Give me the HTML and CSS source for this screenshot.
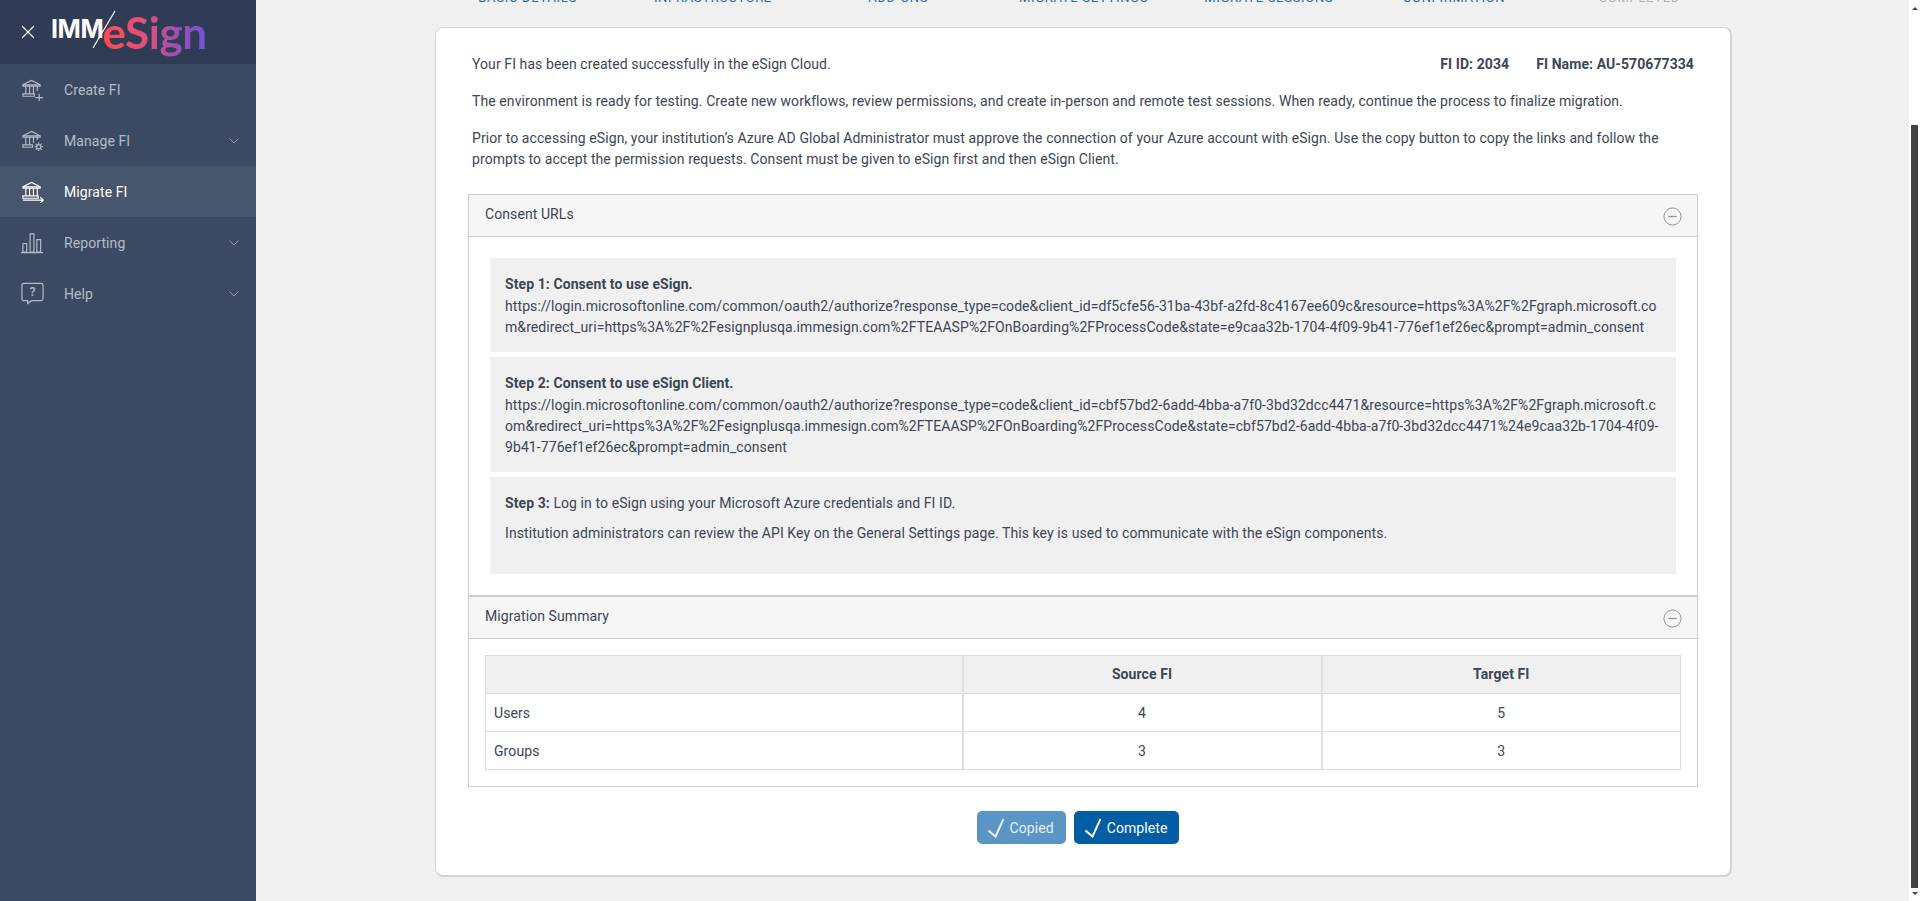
FILE: index.html
```html
<!DOCTYPE html>
<html lang="en">
<head>
<meta charset="utf-8">
<title>Migrate FI</title>
<link rel="stylesheet" href="styles.css">
</head>
<body>
<div class="app">
  <aside class="sidebar">
    <header class="brand">
      <svg class="close-icon" viewBox="0 0 14 14"><path d="M1 1l12 12M13 1L1 13"/></svg>
      <div class="logo">
        <span class="logo-imm">IMM</span>
        <span class="logo-esign">eSign</span>
        <svg class="logo-slash" viewBox="0 0 24 40"><path d="M1 38L23 1"/></svg>
      </div>
    </header>
    <nav class="nav">
      <a class="nav-item">
        <svg class="nav-icon" viewBox="0 0 24 24"><path d="M2 7L11 2.500 20 7zM2 7h18v1.500H2zM5 8.500v8M9 8.500v8M13 8.500v8M17 8.500v5M2 16.500h12v2.500H2zM15 20.500h8M19 16.500v8"/></svg>
        <span class="nav-label">Create FI</span>
      </a>
      <a class="nav-item">
        <svg class="nav-icon" viewBox="0 0 24 24"><path d="M2 7L11 2.500 20 7zM2 7h18v1.500H2zM5 8.500v8M9 8.500v8M13 8.500v6M17 8.500v3M2 16.500h10v2.500H2z"/><circle cx="18.500" cy="18.500" r="2.200"/><path d="M18.500 14v2M18.500 21v2M14 18.500h2M21 18.500h2M15.300 15.300l1.500 1.500M20.200 20.200l1.500 1.500M21.700 15.300l-1.500 1.500M16.800 20.200l-1.500 1.500"/></svg>
        <span class="nav-label">Manage FI</span>
        <svg class="chevron" viewBox="0 0 10 6"><path d="M.5.500L5 5 9.500.500"/></svg>
      </a>
      <a class="nav-item is-active">
        <svg class="nav-icon" viewBox="0 0 24 24"><path d="M2 7L11 2.500 20 7zM2 7h18v1.500H2zM5 8.500v8M9 8.500v8M13 8.500v8M17 8.500v8M2 16.500h16v2.500H2zM2 21h21M20 18l3.300 3-3.300 3"/></svg>
        <span class="nav-label">Migrate FI</span>
      </a>
      <a class="nav-item">
        <svg class="nav-icon" viewBox="0 0 24 24"><path d="M2 13h4v9H2zM9.500 3h4v19h-4zM16.500 9h4v13h-4zM0 22.500h23"/></svg>
        <span class="nav-label">Reporting</span>
        <svg class="chevron" viewBox="0 0 10 6"><path d="M.5.500L5 5 9.500.500"/></svg>
      </a>
      <a class="nav-item">
        <svg class="nav-icon" viewBox="0 0 24 24"><path d="M3 1.500h18a2 2 0 0 1 2 2v14a2 2 0 0 1-2 2H11l-4 3v-3H3a2 2 0 0 1-2-2v-14a2 2 0 0 1 2-2z"/><text class="help-mark" x="12" y="15" text-anchor="middle">?</text></svg>
        <span class="nav-label">Help</span>
        <svg class="chevron" viewBox="0 0 10 6"><path d="M.5.500L5 5 9.500.500"/></svg>
      </a>
    </nav>
  </aside>

  <main class="main">
    <ol class="stepper">
      <li>Basic Details</li>
      <li>Infrastructure</li>
      <li>Add-Ons</li>
      <li>Migrate Settings</li>
      <li>Migrate Sessions</li>
      <li>Confirmation</li>
      <li class="is-pending">Completed</li>
    </ol>

    <section class="card">
      <div class="intro">
        <div class="intro-top">
          <p>Your FI has been created successfully in the eSign Cloud.</p>
          <div class="fi-meta"><strong>FI ID: 2034</strong><strong>FI Name: AU-570677334</strong></div>
        </div>
        <p>The environment is ready for testing. Create new workflows, review permissions, and create in-person and remote test sessions. When ready, continue the process to finalize migration.</p>
        <p>Prior to accessing eSign, your institution’s Azure AD Global Administrator must approve the connection of your Azure account with eSign. Use the copy button to copy the links and follow the prompts to accept the permission requests. Consent must be given to eSign first and then eSign Client.</p>
      </div>

      <div class="accordion">
        <div class="panel">
          <div class="panel-head">
            <span>Consent URLs</span>
            <svg class="toggle" viewBox="0 0 20 20"><circle cx="10" cy="10" r="9"/><path d="M5.500 10h9"/></svg>
          </div>
          <div class="panel-body consent">
            <div class="step-box">
              <strong class="step-title">Step 1: Consent to use eSign.</strong>
              <div class="url">https://login.microsoftonline.com/common/oauth2/authorize?response_type=code&amp;client_id=df5cfe56-31ba-43bf-a2fd-8c4167ee609c&amp;resource=https%3A%2F%2Fgraph.microsoft.com&amp;redirect_uri=https%3A%2F%2Fesignplusqa.immesign.com%2FTEAASP%2FOnBoarding%2FProcessCode&amp;state=e9caa32b-1704-4f09-9b41-776ef1ef26ec&amp;prompt=admin_consent</div>
            </div>
            <div class="step-box">
              <strong class="step-title">Step 2: Consent to use eSign Client.</strong>
              <div class="url">https://login.microsoftonline.com/common/oauth2/authorize?response_type=code&amp;client_id=cbf57bd2-6add-4bba-a7f0-3bd32dcc4471&amp;resource=https%3A%2F%2Fgraph.microsoft.com&amp;redirect_uri=https%3A%2F%2Fesignplusqa.immesign.com%2FTEAASP%2FOnBoarding%2FProcessCode&amp;state=cbf57bd2-6add-4bba-a7f0-3bd32dcc4471%24e9caa32b-1704-4f09-9b41-776ef1ef26ec&amp;prompt=admin_consent</div>
            </div>
            <div class="step-box step-last">
              <p><strong>Step 3:</strong> Log in to eSign using your Microsoft Azure credentials and FI ID.</p>
              <p>Institution administrators can review the API Key on the General Settings page. This key is used to communicate with the eSign components.</p>
            </div>
          </div>
        </div>

        <div class="panel panel-second">
          <div class="panel-head">
            <span>Migration Summary</span>
            <svg class="toggle" viewBox="0 0 20 20"><circle cx="10" cy="10" r="9"/><path d="M5.500 10h9"/></svg>
          </div>
          <div class="panel-body summary">
            <table class="summary-table">
              <colgroup><col class="col-name"><col class="col-val"><col class="col-val"></colgroup>
              <thead>
                <tr><th></th><th>Source FI</th><th>Target FI</th></tr>
              </thead>
              <tbody>
                <tr><td>Users</td><td>4</td><td>5</td></tr>
                <tr><td>Groups</td><td>3</td><td>3</td></tr>
              </tbody>
            </table>
          </div>
        </div>
      </div>

      <div class="actions">
        <button class="btn btn-muted" type="button"><svg class="check" viewBox="0 0 16 20"><path d="M.5 12.500L7.500 18.500 15.500 1"/></svg>Copied</button>
        <button class="btn" type="button"><svg class="check" viewBox="0 0 16 20"><path d="M.5 12.500L7.500 18.500 15.500 1"/></svg>Complete</button>
      </div>
    </section>
  </main>

  <div class="scrollbar">
    <span class="scroll-arrow scroll-up"></span>
    <span class="scroll-thumb"></span>
    <span class="scroll-arrow scroll-down"></span>
  </div>
</div>
</body>
</html>
```
FILE: styles.css
```css
* { box-sizing: border-box; }
html, body { margin: 0; height: 100%; overflow: hidden; }
body {
  font-family: Roboto, "Liberation Sans", sans-serif;
  font-size: 14px;
  line-height: 21px;
  letter-spacing: .085px;
  color: #3d4653;
  background: #f0f0f0;
}
.app { display: flex; height: 901px; }

/* Sidebar */
.sidebar { width: 256px; flex: none; background: #3b4a62; color: #b4bcc8; }
.brand {
  height: 64px;
  display: flex;
  align-items: center;
  background: #303c55;
  padding-left: 21px;
  gap: 16px;
}
.close-icon { width: 14px; height: 14px; fill: none; stroke: #fff; stroke-width: 1.1; }
.logo { position: relative; display: flex; align-items: baseline; height: 50px; }
.logo-imm { font-family: Inter, sans-serif; font-weight: 700; font-size: 25px; line-height: 50px; color: #fff; letter-spacing: -0.4px; position: relative; top: -11px; }
.logo-esign {
  font-family: Lato, sans-serif;
  font-weight: 700;
  font-size: 44px;
  line-height: 50px;
  letter-spacing: -.4px;
  margin-left: -1px;
  background: linear-gradient(90deg, #ff4a4f 0%, #e2507c 40%, #a050b0 70%, #6f52d8 100%);
  -webkit-background-clip: text;
  background-clip: text;
  color: transparent;
}
.logo-slash { position: absolute; left: 41px; top: 3px; width: 24px; height: 40px; fill: none; stroke: #fff; stroke-width: 1.2; }
.nav { display: flex; flex-direction: column; }
.nav-item { height: 51px; display: flex; align-items: center; padding-left: 21px; }
.nav-item.is-active { background: #47566c; color: #fff; }
.nav-icon { width: 23px; height: 23px; flex: none; fill: none; stroke: currentColor; stroke-width: 1.2; }
.help-mark { font-family: Roboto, sans-serif; font-size: 13px; font-weight: 500; fill: currentColor; stroke: none; }
.nav-label { margin-left: 20px; padding-top: 2px; flex: 1; }
.chevron { width: 10px; height: 6px; margin-right: 17px; fill: none; stroke: #8f99a8; stroke-width: 1; }

/* Main */
.main { flex: 1; min-width: 0; padding: 0 177px 0 179px; overflow: hidden; }
.stepper {
  list-style: none;
  margin: -11px 0 0;
  padding: 0;
  height: 38px;
  display: grid;
  grid-template-columns: repeat(7, 1fr);
  font-size: 13px;
  line-height: 18px;
  letter-spacing: .7px;
  text-transform: uppercase;
  text-align: center;
  color: #2a6aa8;
}
.stepper .is-pending { color: #b2b2b2; }

.card {
  background: #fff;
  border: 1px solid #d4d4d4;
  border-width: 1px 2px 2px 1px;
  border-radius: 8px;
  height: 850px;
  padding: 26px 32px 0;
}
.intro { padding: 0 4px; }
.intro p { margin: 0 0 16px; }
.intro-top { display: flex; justify-content: space-between; }
.fi-meta { display: flex; gap: 27px; }
strong { font-weight: 700; }

.accordion { margin-top: 24px; }
.panel { border: 1px solid #ccc; border-bottom: 0; }
.panel-second { border-top-width: 2px; border-bottom: 1px solid #ccc; }
.panel-head {
  height: 42px;
  display: flex;
  align-items: center;
  justify-content: space-between;
  padding: 0 15px 0 16px;
  background: #f6f6f6;
  border-bottom: 1px solid #ccc;
}
.panel-head span { padding-bottom: 2px; }
.toggle { width: 19px; height: 19px; margin-top: 2px; fill: none; stroke: #8a8f96; stroke-width: 1; }
.toggle path { stroke-width: 1.5; stroke: #999; }
.consent { padding: 21px; display: flex; flex-direction: column; gap: 5px; }
.step-box { background: #f0f0f0; padding: 16px 15px 14px; }
.step-title { display: block; margin-bottom: 1px; }
.url { word-break: break-all; }
.step-last { padding: 16px 15px 30px; }
.step-last p { margin: 0 0 9px; }
.step-last p:last-child { margin: 0; }

.summary { padding: 16px 18px 16px 16px; }
.summary-table { width: 100%; table-layout: fixed; border-collapse: collapse; }
.col-name { width: 477px; }
.col-val { width: 359px; }
.summary-table th, .summary-table td {
  height: 38px;
  padding: 0 8px;
  border: 1px solid #dcdcdc;
  text-align: center;
  font-weight: 400;
}
.summary-table td { padding-top: 2px; }
.summary-table th { background: #f0f0f0; font-weight: 700; }
.summary-table th + th, .summary-table td + td { border-left: 2px solid #dde0e5; }
.summary-table td:first-child { text-align: left; }

.actions { display: flex; justify-content: center; gap: 8px; margin-top: 24px; padding-right: 10px; }
.btn {
  height: 33px;
  display: inline-flex;
  align-items: center;
  gap: 6px;
  padding: 0 12px 0 11px;
  border: 0;
  border-radius: 5px;
  background: #035da5;
  color: #fff;
  font: 14px/1 Roboto, sans-serif;
  letter-spacing: .085px;
}
.btn-muted { background: #5b95c5; color: #e8f0f7; }
.check { width: 16px; height: 20px; fill: none; stroke: #fff; stroke-width: 2; }
.btn-muted .check { stroke: #e8f0f7; }

/* Scrollbar */
.scrollbar { width: 11px; flex: none; background: #fff; display: flex; flex-direction: column; align-items: center; }
.scroll-thumb { width: 7px; height: 763px; margin-top: 115px; background: #424242; }
.scroll-arrow { width: 0; height: 0; border-left: 3.500px solid transparent; border-right: 3.500px solid transparent; }
.scroll-up { border-bottom: 3.500px solid #444; margin-top: 7px; }
.scroll-down { border-top: 3.500px solid #444; margin-top: 4px; }
```
